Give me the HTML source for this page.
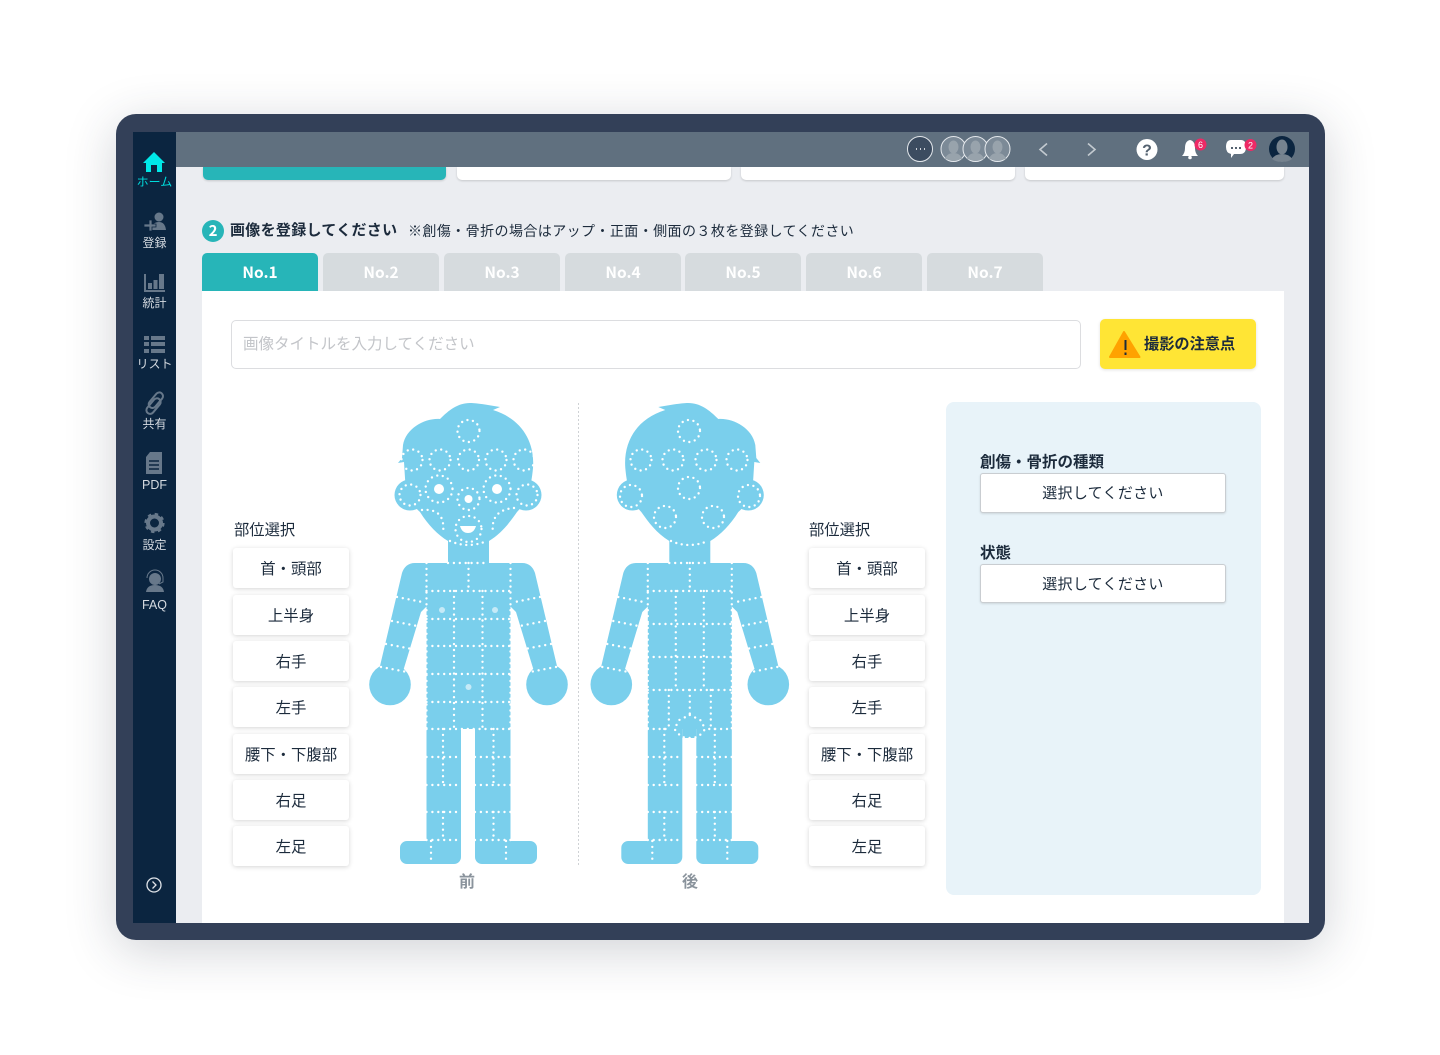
<!DOCTYPE html>
<html lang="ja">
<head>
<meta charset="utf-8">
<title>画像登録</title>
<style>
*{box-sizing:border-box}
html,body{margin:0;padding:0;background:#fff}
body{width:1440px;height:1055px;position:relative;overflow:hidden;font-family:"Liberation Sans","Noto Sans CJK JP",sans-serif;color:#1c2b3c}
.a{position:absolute}
#frame{left:116px;top:114px;width:1209px;height:826px;border-radius:20px;background:#334058;box-shadow:0 10px 50px rgba(40,50,70,.22)}
#screen{left:133px;top:132px;width:1176px;height:791px;background:#ebedf1;overflow:hidden}
#side{left:133px;top:132px;width:43px;height:791px;background:#0b2540}
#head{left:176px;top:132px;width:1133px;height:35px;background:#60707f}
.top{top:167px;height:13px;background:#fff;border-radius:0 0 5px 5px;box-shadow:0 1px 2px rgba(0,0,0,.16)}
.nav{left:133px;width:43px;text-align:center;font-size:12px;line-height:14px;color:#d5dae0;white-space:nowrap}
.tab{top:253px;width:116px;height:38px;border-radius:5px 5px 0 0;background:#d6dbde;color:#fff;font-family:"Noto Sans CJK JP",sans-serif;font-weight:700;font-size:15.5px;line-height:38px;text-align:center}
#card{left:202px;top:291px;width:1082px;height:632px;background:#fff}
#input{left:231px;top:320px;width:850px;height:49px;border:1px solid #dcdde0;border-radius:5px;padding-left:11px;font-size:15.5px;line-height:48px;color:#c3c5c9}
#warn{left:1100px;top:319px;width:156px;height:50px;border-radius:5px;background:#ffe535;box-shadow:0 1px 3px rgba(0,0,0,.12);font-weight:700;font-size:15.2px;line-height:51px;padding-left:44px;color:#1c2b3c;white-space:nowrap}
#panel{left:946px;top:402px;width:315px;height:493px;background:#e8f3f9;border-radius:8px}
.lb{font-size:15.5px;line-height:18px;font-weight:700;white-space:nowrap}
.sel{left:980px;width:246px;height:40px;background:#fff;border:1px solid #c9cdd1;border-radius:3px;text-align:center;font-size:15px;line-height:39px;letter-spacing:.3px;box-shadow:0 1px 2px rgba(0,0,0,.12)}
.b{width:116px;height:40px;background:#fff;border-radius:3px;box-shadow:0 1px 5px rgba(0,0,0,.17);text-align:center;font-size:15.4px;line-height:43px;white-space:nowrap}
.part{font-size:15.3px;line-height:18px;white-space:nowrap}
.d{fill:none;stroke:#fff;stroke-width:2.4;stroke-linecap:round;stroke-dasharray:0 5.9}
.cap{font-size:16px;line-height:20px;font-weight:700;color:#8a939c;width:40px;text-align:center}
svg{position:absolute;left:0;top:0;overflow:visible}
</style>
</head>
<body>
<div class="a" id="frame"></div>
<div class="a" id="screen"></div>
<div class="a top" style="left:203px;width:243px;background:#27b5b8"></div>
<div class="a top" style="left:457px;width:274px"></div>
<div class="a top" style="left:741px;width:274px"></div>
<div class="a top" style="left:1025px;width:259px"></div>
<div class="a" id="head"></div>
<div class="a" id="side"></div>

<div class="a nav" style="top:175px;color:#00dcdc">ホーム</div>
<div class="a nav" style="top:236px">登録</div>
<div class="a nav" style="top:296px">統計</div>
<div class="a nav" style="top:357px">リスト</div>
<div class="a nav" style="top:417px">共有</div>
<div class="a nav" style="top:478px;font-size:12.5px">PDF</div>
<div class="a nav" style="top:538px">設定</div>
<div class="a nav" style="top:598px;font-size:12.5px">FAQ</div>

<div class="a" style="left:202px;top:220px;width:22px;height:22px;border-radius:50%;background:#27b5b8;color:#fff;font-family:'Noto Sans CJK JP',sans-serif;font-weight:700;font-size:15px;line-height:22px;text-align:center">2</div>
<div class="a" style="left:230px;top:220px;font-size:15px;line-height:22px;font-weight:700;letter-spacing:.3px;white-space:nowrap">画像を登録してください</div>
<div class="a" style="left:408px;top:220px;font-size:14px;line-height:22px;letter-spacing:.42px;white-space:nowrap">※創傷・骨折の場合はアップ・正面・側面の３枚を登録してください</div>

<div class="a tab" style="left:202px;background:#27b5b8">No.1</div>
<div class="a tab" style="left:323px">No.2</div>
<div class="a tab" style="left:444px">No.3</div>
<div class="a tab" style="left:565px">No.4</div>
<div class="a tab" style="left:685px">No.5</div>
<div class="a tab" style="left:806px">No.6</div>
<div class="a tab" style="left:927px">No.7</div>

<div class="a" id="card"></div>
<div class="a" id="input">画像タイトルを入力してください</div>
<div class="a" id="warn">撮影の注意点</div>
<div class="a" id="panel"></div>
<div class="a lb" style="left:980px;top:454px">創傷・骨折の種類</div>
<div class="a sel" style="top:473px">選択してください</div>
<div class="a lb" style="left:980px;top:545px">状態</div>
<div class="a sel" style="top:564px;height:39px">選択してください</div>

<div class="a part" style="left:234px;top:522px">部位選択</div>
<div class="a b" style="left:233px;top:548px">首・頭部</div>
<div class="a b" style="left:233px;top:595px">上半身</div>
<div class="a b" style="left:233px;top:641px">右手</div>
<div class="a b" style="left:233px;top:687px">左手</div>
<div class="a b" style="left:233px;top:734px">腰下・下腹部</div>
<div class="a b" style="left:233px;top:780px">右足</div>
<div class="a b" style="left:233px;top:826px">左足</div>

<div class="a part" style="left:809px;top:522px">部位選択</div>
<div class="a b" style="left:809px;top:548px">首・頭部</div>
<div class="a b" style="left:809px;top:595px">上半身</div>
<div class="a b" style="left:809px;top:641px">右手</div>
<div class="a b" style="left:809px;top:687px">左手</div>
<div class="a b" style="left:809px;top:734px">腰下・下腹部</div>
<div class="a b" style="left:809px;top:780px">右足</div>
<div class="a b" style="left:809px;top:826px">左足</div>

<div class="a cap" style="left:447px;top:873px">前</div>
<div class="a cap" style="left:670px;top:873px">後</div>

<svg width="1440" height="1055" viewBox="0 0 1440 1055">
<defs>
<g id="hd" fill="#7acfec">
<path d="M500 407L485 404.500C478 403.500 474 403 470 403C458 403 449 410 440 419C425 418 406 428 403 445L402 458L398 463L404 462L405 478C406 495 412 505 420 512C428 525 438 535 448 541V566H489V541C502 533 510 522 517 512C526 503 531 490 533 468C535 442 522 419 493 410Z"/>
<circle cx="410" cy="495" r="15.500"/><circle cx="526" cy="495" r="15.500"/>
</g>
<g id="bd" fill="#7acfec">
<path d="M415 563H522C529 563 533 567 535 573L557 666L536 678L516 612L510 606V690H427V606L421 612L401 678L380 666L402 573C404 567 408 563 415 563Z"/>
<circle cx="390" cy="684.500" r="20.800"/><circle cx="547" cy="684.500" r="20.800"/>
<path d="M426.500 600H510.500V841H530A7 7 0 0 1 537 848V857A7 7 0 0 1 530 864H482A7 7 0 0 1 475 857V729H461V857A7 7 0 0 1 454 864H407A7 7 0 0 1 400 857V848A7 7 0 0 1 407 841H426.500Z"/>
</g>
<g id="com">
<path class="d" d="M448 563H489M426.500 563V729M510.500 563V729M468.500 563V591M426.500 591H510.500M397 597L422 602M392 621L417 626M386 644L412 649M381 667L407 672M540 597L515 602M545 621L520 626M551 644L525 649M556 667L530 672"/>
<path class="d" d="M426.500 757H461M475 757H510.500M426.500 785H461M475 785H510.500M426.500 812H461M475 812H510.500M426.500 840H461M475 840H510.500M443 729V785M493.500 729V785M443 812V840M493.500 812V840M431 841V864M506 841V864"/>
</g>
</defs>

<!-- front figure -->
<use href="#hd"/><use href="#bd"/><use href="#com"/>
<path class="d" d="M426.500 619H510.500M426.500 646H510.500M426.500 674H510.500M426.500 702H510.500M426.500 729H510.500M454 591V729M482.500 591V729"/>
<g class="d" style="stroke-dasharray:0 5.6">
<circle cx="468.500" cy="431" r="11"/>
<circle cx="412" cy="460" r="10.500"/><circle cx="440" cy="460" r="10.500"/><circle cx="468.500" cy="460" r="10.500"/><circle cx="496" cy="460" r="10.500"/><circle cx="524" cy="460" r="10.500"/>
<circle cx="439" cy="489" r="13.500"/><circle cx="497" cy="489" r="13.500"/><circle cx="468.500" cy="499" r="11"/>
<circle cx="410" cy="495" r="10.500"/><circle cx="527" cy="495" r="10.500"/><circle cx="468.500" cy="529" r="13"/>
<path d="M422 510Q446 508 443 533M514 508Q490 510 493 533M450 541Q468 549 487 541"/>
</g>
<circle cx="439" cy="489" r="5" fill="#fff"/><circle cx="497" cy="489" r="5" fill="#fff"/><circle cx="468.500" cy="499" r="4" fill="#fff"/>
<path d="M460 526H476Q474 533 468 533Q462 533 460 526Z" fill="#fff"/>
<circle cx="442" cy="610" r="3" fill="#c6eaf7"/><circle cx="495" cy="610" r="3" fill="#c6eaf7"/><circle cx="468.500" cy="687" r="3" fill="#c6eaf7"/>

<!-- divider -->
<path d="M578.500 403V866" stroke="#cfd2d5" stroke-width="1" stroke-dasharray="2 2"/>

<!-- back figure -->
<g transform="translate(1158.300 0) scale(-1 1)"><use href="#hd"/></g>
<g transform="translate(221.300 0)">
<use href="#bd"/><rect x="461" y="729" width="14" height="9" fill="#7acfec"/><use href="#com"/>
<path class="d" d="M426.500 624H510.500M426.500 657H510.500M426.500 690H510.500M426.500 729H449M488 729H510.500M454.500 591V690M482.500 591V690M447.500 690V729M489.500 690V729M468.500 690V715"/>
<path class="d" d="M468.500 715L479 720L484 729L477 737L468.500 738L460 737L453 729L458 720Z"/>
</g>
<g class="d" style="stroke-dasharray:0 5.6">
<circle cx="689" cy="431" r="11"/>
<circle cx="641" cy="460" r="10.500"/><circle cx="673" cy="460" r="10.500"/><circle cx="706" cy="460" r="10.500"/><circle cx="737" cy="460" r="10.500"/>
<circle cx="689" cy="488" r="11"/><circle cx="631" cy="496" r="11"/><circle cx="749" cy="496" r="11"/>
<circle cx="665" cy="517" r="11"/><circle cx="713" cy="517" r="11"/>
<path d="M671 541Q689 549 708 541"/>
</g>

<!-- warning icon -->
<path d="M1124 332L1139.500 357H1110Z" fill="#ffa200" stroke="#ffa200" stroke-width="2" stroke-linejoin="round"/>
<path d="M1125.500 340V350M1125.500 352.500V355" stroke="#1c2b3c" stroke-width="2"/>

<!-- sidebar icons -->
<path d="M154 152L143 163H146V172H151V165H157V172H162V163H165Z" fill="#00e8e8"/>
<g fill="#67788a">
<circle cx="159" cy="217" r="4.500"/><path d="M151 230Q152 222 159 222Q165 222 166 230Z"/>
<path d="M144 224H149V220H152V224H156V227H152V231H149V227H144Z" stroke="#0b2540" stroke-width=".8"/>
<path d="M144 274H146V290H165V292H144Z"/><rect x="148" y="283" width="4" height="6"/><rect x="153.500" y="280" width="4" height="9"/><rect x="159" y="274" width="5" height="15"/>
<rect x="144" y="336" width="5" height="4"/><rect x="151" y="336" width="14" height="4"/><rect x="144" y="342" width="5" height="4"/><rect x="151" y="342" width="14" height="4"/><rect x="144" y="349" width="5" height="4"/><rect x="151" y="349" width="14" height="4"/>
<path d="M150 452H162V474H146V457Z"/>
<circle cx="155" cy="579" r="6"/><path d="M146 592Q147 585 155 585Q163 585 164 592Z"/>
</g>
<circle cx="154.500" cy="523" r="6.500" fill="none" stroke="#67788a" stroke-width="4"/>
<circle cx="154.500" cy="523" r="8.800" fill="none" stroke="#67788a" stroke-width="2.600" stroke-dasharray="3.400 3.500"/>
<path d="M149 461H159M149 465H159M149 469H159" stroke="#0b2540" stroke-width="1.500"/>
<path d="M147 578A8 8 0 0 1 163 578M163 578V582L159 584" fill="none" stroke="#67788a" stroke-width="1"/>
<g transform="rotate(40 154.500 403)" fill="none" stroke="#67788a" stroke-width="2">
<rect x="150" y="391" width="7.500" height="18" rx="3.700"/><rect x="152" y="397" width="7.500" height="18" rx="3.700"/>
</g>
<circle cx="154" cy="885" r="7" fill="none" stroke="#dfe3e8" stroke-width="1.300"/>
<path d="M152.500 881.500L156 885L152.500 888.500" fill="none" stroke="#dfe3e8" stroke-width="1.300"/>

<!-- header icons -->
<circle cx="920" cy="149" r="12.500" fill="#3c4c60" stroke="#e4e8ec" stroke-width="1"/>
<path d="M916 149H917M920 149H921M924 149H925" stroke="#fff" stroke-width="1.500"/>
<circle cx="953.500" cy="149" r="12.500" fill="#7c8a97" stroke="#e4e8ec" stroke-width="1"/>
<circle cx="975.500" cy="149" r="12.500" fill="#7c8a97" stroke="#e4e8ec" stroke-width="1"/>
<circle cx="997.500" cy="149" r="12.500" fill="#7c8a97" stroke="#e4e8ec" stroke-width="1"/>
<g fill="#98a3ac">
<ellipse cx="953.500" cy="147" rx="5" ry="6.500"/><path d="M945 159Q947 153 953.500 153Q960 153 962 159L953.500 161Z"/>
<ellipse cx="975.500" cy="147" rx="5" ry="6.500"/><path d="M967 159Q969 153 975.500 153Q982 153 984 159L975.500 161Z"/>
<ellipse cx="997.500" cy="147" rx="5" ry="6.500"/><path d="M989 159Q991 153 997.500 153Q1004 153 1006 159L997.500 161Z"/>
</g>
<path d="M1047 144L1040 150L1047 156M1088 144L1095 150L1088 156" transform="translate(0 -.5)" fill="none" stroke="#c3cad0" stroke-width="1.600"/>
<circle cx="1147" cy="149.500" r="10.500" fill="#fff"/>
<text x="1147" y="155.500" text-anchor="middle" font-size="16" font-weight="700" fill="#53616f" font-family="Liberation Sans">?</text>
<path d="M1190 140Q1185 141 1185 148Q1185 153 1182 156H1198Q1195 153 1195 148Q1195 141 1190 140Z" fill="#fff"/><circle cx="1190" cy="157.500" r="1.800" fill="#fff"/>
<circle cx="1200.500" cy="144.500" r="6" fill="#ee2a66"/>
<text x="1200.500" y="148" text-anchor="middle" font-size="9" fill="#fff" font-family="Liberation Sans">6</text>
<path d="M1231 140H1241Q1246 140 1246 147Q1246 154 1240 154H1234L1231 158L1231 154Q1226 153 1226 147Q1226 140 1231 140Z" fill="#fff"/>
<path d="M1231 148H1233M1235 148H1237M1239 148H1241" stroke="#53616f" stroke-width="2"/>
<circle cx="1250.500" cy="145" r="6" fill="#ee2a66"/>
<text x="1250.500" y="148.500" text-anchor="middle" font-size="9" fill="#fff" font-family="Liberation Sans">2</text>
<circle cx="1282" cy="149" r="13" fill="#0b2540"/>
<ellipse cx="1282" cy="147" rx="5.500" ry="7.500" fill="#76838f"/><path d="M1272 159Q1275 154 1282 154Q1289 154 1292 159Q1288 162 1282 162Q1276 162 1272 159Z" fill="#76838f"/>
</svg>
</body>
</html>
